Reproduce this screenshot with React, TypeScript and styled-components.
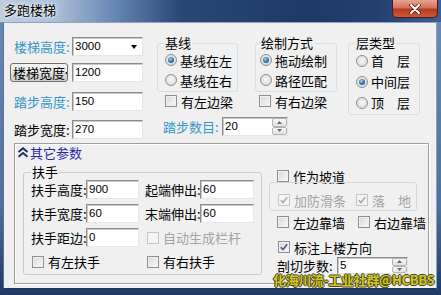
import React from 'react';
import styled, { createGlobalStyle } from 'styled-components';

const CJK = `"Noto Sans CJK SC", "Noto Sans", sans-serif`;
const NUM = `"Liberation Sans", Arial, sans-serif`;

const GlobalStyle = createGlobalStyle`
  html, body { margin: 0; padding: 0; background: #ffffff; }
  body { font-family: ${CJK}; font-size: 13px; color: #000; }
  * { box-sizing: border-box; }
`;

const Window = styled.div`
  position: relative;
  width: 441px;
  height: 295px;
  display: flex;
  flex-direction: column;
  overflow: hidden;
  background: linear-gradient(to bottom, #6c8bb8 0%, #4e6f9f 70%, #1f3866 100%);
`;

const TitleBar = styled.div`
  height: 22px;
  flex: none;
  display: flex;
  align-items: flex-start;
  background: linear-gradient(to right, #bccde1 0%, #a9bdd6 13%, #6282b0 27%, #2a4776 41%, #1e3968 70%, #253f70 86%, #3f5f91 100%);
`;

const Title = styled.span`
  font: 13px/14px ${CJK};
  color: #000;
  margin: 3px 0 0 4px;
  text-shadow: 0 0 6px #ffffff, 0 0 3px #ffffff;
`;

const CloseBtn = styled.div`
  margin-left: auto;
  margin-right: 3px;
  width: 46px;
  height: 18px;
  border: 1px solid #4a1a14;
  border-top: none;
  border-radius: 0 0 5px 5px;
  background: linear-gradient(#e7a390 0%, #d2735c 45%, #b9391f 55%, #cc5a3c 100%);
  display: flex;
  align-items: center;
  justify-content: center;
`;

const Body = styled.div`
  flex: 1;
  display: flex;
  padding: 0 4px 6px 3px;
`;

const Client = styled.div`
  flex: 1;
  display: flex;
  flex-direction: column;
  background: #f0f0f0;
  border: 1px solid;
  border-color: #8ea3c2 #8ea3c2 #1d355f #5f7088;
`;

const TopSection = styled.div`
  height: 120px;
  flex: none;
  display: flex;
  align-items: flex-start;
  padding-left: 6px;
`;

const LeftCol = styled.div`
  width: 133px;
  display: flex;
  flex-direction: column;
  padding-top: 14px;
`;

const Row = styled.div<{ $mt?: number; $h?: number; $pl?: number }>`
  display: flex;
  align-items: center;
  height: ${(p) => p.$h ?? 19}px;
  margin-top: ${(p) => p.$mt ?? 0}px;
  padding-left: ${(p) => p.$pl ?? 0}px;
  white-space: nowrap;
`;

const FieldLabel = styled.span<{ $w: number; $c?: string; $pl?: number }>`
  width: ${(p) => p.$w}px;
  padding-left: ${(p) => p.$pl ?? 0}px;
  flex: none;
  font: 13px/15px ${CJK};
  color: ${(p) => p.$c ?? '#000'};
  white-space: nowrap;
`;

const TextBox = styled.div<{ $w: number; $h?: number }>`
  width: ${(p) => p.$w}px;
  height: ${(p) => p.$h ?? 19}px;
  flex: none;
  display: flex;
  align-items: center;
  padding-left: 2px;
  background: #ffffff;
  border: 1px solid;
  border-color: #8c8c8c #e6e6e6 #e6e6e6 #8c8c8c;
  box-shadow: inset 1px 1px 0 #c9c9c9;
  font: 11.5px/13px ${NUM};
  color: #000;
`;

const ComboArrow = styled.span`
  margin-left: auto;
  margin-right: 5px;
  width: 0;
  height: 0;
  border-left: 3.5px solid transparent;
  border-right: 3.5px solid transparent;
  border-top: 4px solid #000;
`;

const PushButton = styled.div<{ $w: number }>`
  width: ${(p) => p.$w}px;
  height: 19px;
  flex: none;
  margin-right: 4px;
  overflow: hidden;
  display: flex;
  align-items: center;
  padding-left: 2px;
  border: 1px solid #707070;
  border-radius: 3px;
  background: linear-gradient(#f3f3f3 0%, #ebebeb 48%, #dddddd 52%, #cfcfcf 100%);
  font: 13px/15px ${CJK};
  white-space: nowrap;
`;

const SpinBtns = styled.div`
  margin-left: auto;
  width: 15px;
  height: 100%;
  display: flex;
  flex-direction: column;
  flex: none;
`;

const SpinBtn = styled.div`
  flex: 1;
  display: flex;
  align-items: center;
  justify-content: center;
  border: 1px solid #b4b4b4;
  border-radius: 2px;
  background: linear-gradient(#f7f7f7, #e2e2e2);
`;

const MidArea = styled.div`
  margin-left: 14px;
  padding-top: 13px;
  display: flex;
  align-items: flex-start;
`;

const MidCol = styled.div<{ $w: number }>`
  width: ${(p) => p.$w}px;
  flex: none;
  display: flex;
  flex-direction: column;
`;

const Group = styled.fieldset<{ $w: number; $h?: number; $line?: string }>`
  margin: 0;
  padding: 0 0 1px 0;
  min-width: 0;
  width: ${(p) => p.$w}px;
  ${(p) => (p.$h ? `height: ${p.$h}px;` : '')}
  border: 1px solid ${(p) => p.$line ?? '#d5dfe5'};
  border-radius: 3px;
`;

const Legend = styled.legend<{ $ml: number }>`
  font: 13px/14px ${CJK};
  padding: 0 1px;
  margin-left: ${(p) => p.$ml}px;
  color: #000;
`;

const OptRow = styled.div<{ $h: number; $pl: number }>`
  height: ${(p) => p.$h}px;
  padding-left: ${(p) => p.$pl}px;
  display: flex;
  align-items: center;
  gap: 3px;
  font: 13px/15px ${CJK};
  white-space: pre;
`;

const RadioDot = styled.span<{ $on?: boolean }>`
  width: 12px;
  height: 12px;
  flex: none;
  border-radius: 50%;
  border: 1px solid #8e8f8f;
  background: radial-gradient(circle at 50% 45%, #f7f7f7 0%, #e2e2e2 60%, #cfcfcf 100%);
  display: flex;
  align-items: center;
  justify-content: center;
  &::after {
    content: '';
    display: ${(p) => (p.$on ? 'block' : 'none')};
    width: 6px;
    height: 6px;
    border-radius: 50%;
    background: radial-gradient(circle at 40% 35%, #a8dcf8 0%, #3b7cb8 45%, #143d6e 100%);
  }
`;

const CheckItem = styled.span<{ $w?: number; $dis?: boolean }>`
  display: flex;
  align-items: center;
  gap: 4px;
  ${(p) => (p.$w ? `width: ${p.$w}px;` : '')}
  flex: none;
  font: 13px/15px ${CJK};
  color: ${(p) => (p.$dis ? '#a3a3a3' : '#000')};
  white-space: pre;
`;

const CheckBox = styled.span<{ $dis?: boolean }>`
  width: 12px;
  height: 12px;
  flex: none;
  display: flex;
  align-items: center;
  justify-content: center;
  border: 1px solid ${(p) => (p.$dis ? '#c4c4c4' : '#8f8f8f')};
  background: ${(p) => (p.$dis ? '#f4f4f4' : 'linear-gradient(135deg, #d6d6d6 0%, #ececec 60%, #f7f7f7 100%)')};
  box-shadow: inset 0 0 0 1px ${(p) => (p.$dis ? '#f4f4f4' : '#f2f2f2')};
`;

const OtherFrame = styled.div`
  margin-left: 10px;
  width: 415px;
  height: 141px;
  flex: none;
  display: flex;
  flex-direction: column;
  border: 1px solid #a0a0a0;
  box-shadow: inset 1px 1px 0 #ffffff, 1px 1px 0 #ffffff;
`;

const FrameHeader = styled.div`
  height: 16px;
  display: flex;
  align-items: center;
  gap: 1px;
  padding-left: 2px;
  font: 13px/15px ${CJK};
  color: #2a2aa6;
`;

const FrameContent = styled.div`
  display: flex;
  align-items: flex-start;
  padding-left: 8px;
  margin-top: 5px;
`;

const HandGrid = styled.div`
  display: grid;
  grid-template-columns: 55px 59px 55px 54px;
  grid-auto-rows: 19px;
  row-gap: 5px;
  padding-left: 7px;
  margin-top: 1px;
  align-items: center;
`;

const Span2 = styled.div<{ $pl?: number }>`
  grid-column: span 2;
  display: flex;
  align-items: center;
  padding-left: ${(p) => p.$pl ?? 0}px;
`;

const RightCol = styled.div`
  margin-left: 6px;
  width: 149px;
  display: flex;
  flex-direction: column;
`;

const SlipBox = styled.div`
  margin-left: 1px;
  width: 148px;
  height: 29px;
  padding: 10px 0 0 8px;
  border: 1px solid #d0d8dd;
  border-radius: 3px;
  display: flex;
  align-items: flex-start;
`;

const Watermark = styled.div`
  position: absolute;
  left: 273px;
  top: 272px;
  font: bold 13px/16px ${CJK};
  letter-spacing: -0.3px;
  color: #d3c72a;
  white-space: nowrap;
  text-shadow: 1px 0 0 #45451a, -1px 0 0 #45451a, 0 1px 0 #45451a, 0 -1px 0 #45451a;
`;

const CheckMark = ({ color }: { color: string }) => (
  <svg width="8" height="8" viewBox="0 0 8 8">
    <path d="M0.8 4.2 L3 6.6 L7.2 1.2" fill="none" stroke={color} strokeWidth="1.6" />
  </svg>
);

const Check = ({ on, dis, label, w }: { on?: boolean; dis?: boolean; label: string; w?: number }) => (
  <CheckItem $w={w} $dis={dis}>
    <CheckBox $dis={dis}>{on && <CheckMark color={dis ? '#a9a9a9' : '#4b5b7c'} />}</CheckBox>
    <span>{label}</span>
  </CheckItem>
);

const Radio = ({ on, label, h, pl }: { on?: boolean; label: string; h: number; pl: number }) => (
  <OptRow $h={h} $pl={pl}>
    <RadioDot $on={on} />
    <span>{label}</span>
  </OptRow>
);

const Spin = ({ value, w, h }: { value: string; w: number; h: number }) => (
  <TextBox $w={w} $h={h}>
    <span>{value}</span>
    <SpinBtns>
      <SpinBtn>
        <svg width="5" height="3" viewBox="0 0 5 3"><path d="M0 3 L2.5 0 L5 3 Z" fill="#6a6a6a" /></svg>
      </SpinBtn>
      <SpinBtn>
        <svg width="5" height="3" viewBox="0 0 5 3"><path d="M0 0 L2.5 3 L5 0 Z" fill="#6a6a6a" /></svg>
      </SpinBtn>
    </SpinBtns>
  </TextBox>
);

const TEAL = '#3596c8';

export default function App() {
  return (
    <>
      <GlobalStyle />
      <Window>
        <TitleBar>
          <Title>多跑楼梯</Title>
          <CloseBtn>
            <svg width="12" height="10" viewBox="0 0 12 10">
              <path d="M2 1 L10 9 M10 1 L2 9" stroke="#5a1d14" strokeWidth="3.6" strokeLinecap="round" />
              <path d="M2 1 L10 9 M10 1 L2 9" stroke="#ffffff" strokeWidth="2" strokeLinecap="round" />
            </svg>
          </CloseBtn>
        </TitleBar>
        <Body>
          <Client>
            <TopSection>
              <LeftCol>
                <Row>
                  <FieldLabel $w={62} $pl={4} $c={TEAL}>楼梯高度:</FieldLabel>
                  <TextBox $w={71}>
                    <span>3000</span>
                    <ComboArrow />
                  </TextBox>
                </Row>
                <Row $mt={7}>
                  <PushButton $w={58}>楼梯宽度&lt;</PushButton>
                  <TextBox $w={71}>1200</TextBox>
                </Row>
                <Row $mt={10}>
                  <FieldLabel $w={62} $pl={4} $c={TEAL}>踏步高度:</FieldLabel>
                  <TextBox $w={71}>150</TextBox>
                </Row>
                <Row $mt={9}>
                  <FieldLabel $w={62} $pl={4}>踏步宽度:</FieldLabel>
                  <TextBox $w={71}>270</TextBox>
                </Row>
              </LeftCol>
              <MidArea>
                <MidCol $w={98}>
                  <Group $w={81}>
                    <Legend $ml={6}>基线</Legend>
                    <Radio on label="基线在左" h={20} pl={7} />
                    <Radio label="基线在右" h={20} pl={7} />
                  </Group>
                  <Row $h={18} $pl={8}>
                    <Check label="有左边梁" />
                  </Row>
                  <Row $mt={7} $pl={6}>
                    <FieldLabel $w={59} $c={TEAL}>踏步数目:</FieldLabel>
                    <Spin value="20" w={66} h={19} />
                  </Row>
                </MidCol>
                <MidCol $w={93}>
                  <Group $w={82}>
                    <Legend $ml={4}>绘制方式</Legend>
                    <Radio on label="拖动绘制" h={20} pl={4} />
                    <Radio label="路径匹配" h={20} pl={4} />
                  </Group>
                  <Row $h={18} $pl={4}>
                    <Check label="有右边梁" />
                  </Row>
                </MidCol>
                <MidCol $w={72}>
                  <Group $w={72}>
                    <Legend $ml={6}>层类型</Legend>
                    <Radio label="首　层" h={21} pl={7} />
                    <Radio on label="中间层" h={21} pl={7} />
                    <Radio label="顶　层" h={21} pl={7} />
                  </Group>
                </MidCol>
              </MidArea>
            </TopSection>
            <OtherFrame>
              <FrameHeader>
                <svg width="12" height="11" viewBox="0 0 12 11">
                  <path d="M1.5 5 L6 1.2 L10.5 5 M1.5 9.8 L6 6 L10.5 9.8" fill="none" stroke="#1c2a5c" strokeWidth="1.8" />
                </svg>
                <span>其它参数</span>
              </FrameHeader>
              <FrameContent>
                <Group $w={239} $h={110} $line="#c4ccd2">
                  <Legend $ml={7}>扶手</Legend>
                  <HandGrid>
                    <FieldLabel $w={55}>扶手高度:</FieldLabel>
                    <TextBox $w={53}>900</TextBox>
                    <FieldLabel $w={55}>起端伸出:</FieldLabel>
                    <TextBox $w={54}>60</TextBox>
                    <FieldLabel $w={55}>扶手宽度:</FieldLabel>
                    <TextBox $w={53}>60</TextBox>
                    <FieldLabel $w={55}>末端伸出:</FieldLabel>
                    <TextBox $w={54}>60</TextBox>
                    <FieldLabel $w={55}>扶手距边:</FieldLabel>
                    <TextBox $w={53}>0</TextBox>
                    <Span2 $pl={2}>
                      <Check dis label="自动生成栏杆" />
                    </Span2>
                    <Span2 $pl={1}>
                      <Check label="有左扶手" />
                    </Span2>
                    <Span2 $pl={2}>
                      <Check label="有右扶手" />
                    </Span2>
                  </HandGrid>
                </Group>
                <RightCol>
                  <Row $mt={5} $h={12} $pl={9}>
                    <Check label="作为坡道" />
                  </Row>
                  <SlipBox>
                    <Row $h={14}>
                      <Check on dis w={78} label="加防滑条" />
                      <Check on dis label="落　地" />
                    </Row>
                  </SlipBox>
                  <Row $mt={4} $h={14} $pl={9}>
                    <Check w={81} label="左边靠墙" />
                    <Check label="右边靠墙" />
                  </Row>
                  <Row $mt={11} $h={14} $pl={10}>
                    <Check on label="标注上楼方向" />
                  </Row>
                  <Row $mt={3} $h={17} $pl={9}>
                    <FieldLabel $w={60}>剖切步数:</FieldLabel>
                    <Spin value="5" w={71} h={17} />
                  </Row>
                </RightCol>
              </FrameContent>
            </OtherFrame>
          </Client>
        </Body>
        <Watermark>化海川流-工业社群@HCBBS</Watermark>
      </Window>
    </>
  );
}
